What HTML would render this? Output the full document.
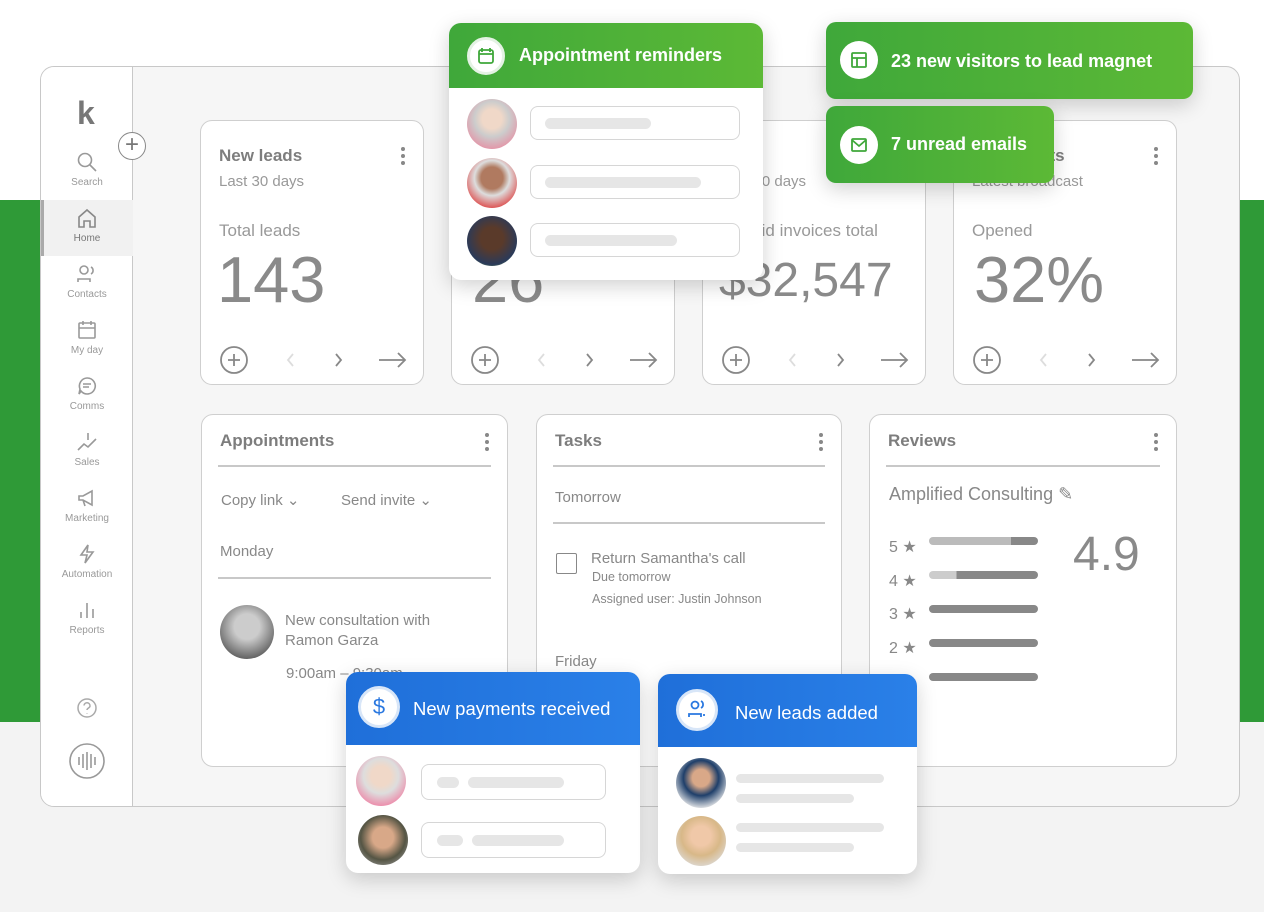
<!DOCTYPE html>
<html><head><meta charset="utf-8"><style>
*{box-sizing:border-box;margin:0;padding:0}
body{width:1264px;height:912px;position:relative;overflow:hidden;background:#fff;font-family:"Liberation Sans",sans-serif;color:#888}
.abs{position:absolute}
.band{left:0;top:200px;width:1264px;height:522px;background:#2f9a37}
.bot{left:0;top:722px;width:1264px;height:190px;background:#f3f3f3}
.frame{left:40px;top:66px;width:1200px;height:741px;border:1.5px solid #c8c8c8;border-radius:14px;background:#f6f6f6;overflow:hidden}
.side{left:0;top:0;width:92px;height:100%;background:#fff;border-right:1.5px solid #c8c8c8}
.nav{position:absolute;left:0;width:92px;text-align:center;font-size:10px;color:#999}
.nav svg{display:block;margin:0 auto 4px}
.card{position:absolute;background:#fff;border:1.5px solid #cfcfcf;border-radius:12px}
.t{font-size:17px;font-weight:bold;color:#7d7d7d}
.s{font-size:15px;color:#999}
.big{font-size:65px;color:#8a8a8a}
.dots{position:absolute;right:18px;top:26px;width:4px}
.dots i{display:block;width:4px;height:4px;border-radius:2px;background:#888;margin-bottom:3px}
.hr{position:absolute;height:1.5px;background:#c8c8c8}
.pop{position:absolute;background:#fff;border-radius:12px;overflow:hidden;box-shadow:0 6px 20px rgba(0,0,0,.18)}
.gh{background:linear-gradient(90deg,#3fa83a,#5cb936);color:#fff;font-weight:bold;font-size:18px}
.bh{background:linear-gradient(90deg,#1f6fd9,#2a80e8);color:#fff;font-weight:bold;font-size:18px}
.ic{position:absolute;width:38px;height:38px;border-radius:50%;background:#fff;border:3px solid #e4f2e4}
.av{position:absolute;width:50px;height:50px;border-radius:50%}
.fld{position:absolute;border:1.5px solid #d6d6d6;border-radius:8px;background:#fff}
.bar{position:absolute;height:11px;border-radius:6px;background:#e6e6e6}
</style></head><body>
<div class="abs band"></div><div class="abs bot"></div>
<div class="abs frame">
 <div class="abs side">
  <div style="position:absolute;left:36px;top:30px;font-size:32px;font-weight:bold;color:#777;line-height:1">k</div>
  <div class="nav" style="top:84px"><svg width="22" height="22" viewBox="0 0 22 22" fill="none" stroke="#999" stroke-width="1.6"><circle cx="9" cy="9" r="6.5"/><path d="M14 14l6 6"/></svg>Search</div>
  <div style="position:absolute;left:0;top:133px;width:92px;height:56px;background:#f1f1f1;border-left:3px solid #aaa"></div>
  <div class="nav" style="top:140px;color:#777"><svg width="22" height="22" viewBox="0 0 22 22" fill="none" stroke="#888" stroke-width="1.6"><path d="M3 10L11 3l8 7v10h-5v-6H8v6H3z"/></svg>Home</div>
  <div class="nav" style="top:196px"><svg width="22" height="22" viewBox="0 0 22 22" fill="none" stroke="#999" stroke-width="1.6"><circle cx="8" cy="7" r="4"/><path d="M2 19v-3h12v3M15 4a4 4 0 010 7"/></svg>Contacts</div>
  <div class="nav" style="top:252px"><svg width="22" height="22" viewBox="0 0 22 22" fill="none" stroke="#999" stroke-width="1.6"><rect x="3" y="4" width="16" height="15" rx="1"/><path d="M3 9h16M7 2v4M15 2v4"/></svg>My day</div>
  <div class="nav" style="top:308px"><svg width="22" height="22" viewBox="0 0 22 22" fill="none" stroke="#999" stroke-width="1.6"><path d="M11 3a8 8 0 11-6 13l-2 3 1-5A8 8 0 0111 3zM7 9h8M7 12h6"/></svg>Comms</div>
  <div class="nav" style="top:364px"><svg width="22" height="22" viewBox="0 0 22 22" fill="none" stroke="#999" stroke-width="1.6"><path d="M2 19l6-6 4 3 8-8M12 2v7"/></svg>Sales</div>
  <div class="nav" style="top:420px"><svg width="22" height="22" viewBox="0 0 22 22" fill="none" stroke="#999" stroke-width="1.6"><path d="M3 9h4l9-5v14l-9-5H3zM7 13l2 6"/></svg>Marketing</div>
  <div class="nav" style="top:476px"><svg width="22" height="22" viewBox="0 0 22 22" fill="none" stroke="#999" stroke-width="1.6"><path d="M12 2L5 12h6l-2 8 8-11h-6z"/></svg>Automation</div>
  <div class="nav" style="top:532px"><svg width="22" height="22" viewBox="0 0 22 22" fill="none" stroke="#999" stroke-width="1.6"><path d="M5 19v-6M11 19V4M17 19v-9"/></svg>Reports</div>
  <svg style="position:absolute;left:35px;top:630px" width="22" height="22" viewBox="0 0 22 22" fill="none" stroke="#aaa" stroke-width="1.5"><circle cx="11" cy="11" r="9"/><path d="M8 8.5a3 3 0 116 .5c0 2-3 2-3 4M11 16v.5"/></svg>
  <svg style="position:absolute;left:27px;top:675px" width="38" height="38" viewBox="0 0 38 38" fill="none" stroke="#999" stroke-width="1.6"><circle cx="19" cy="19" r="17"/><path d="M11 15v8M15 12v14M19 10v18M23 12v14M27 15v8"/></svg>
 </div>
 <div style="position:absolute;left:77px;top:65px;width:28px;height:28px;border-radius:50%;border:1.5px solid #888;background:#fff;text-align:center;line-height:24px;font-size:24px;color:#777">+</div>
</div>

<div class="card" style="left:200px;top:120px;width:224px;height:265px">
 <div class="t abs" style="left:18px;top:25px">New leads</div><div class="dots"><i></i><i></i><i></i></div>
 <div class="s abs" style="left:18px;top:52px">Last 30 days</div>
 <div class="abs" style="left:18px;top:100px;font-size:17px;color:#999">Total leads</div>
 <div class="big abs" style="left:16px;top:121px">143</div>
 <svg class="abs" style="left:18px;top:224px" width="190" height="30" fill="none" stroke-width="1.8"><circle cx="15" cy="15" r="13" stroke="#888"/><path d="M15 9v12M9 15h12" stroke="#888"/><path d="M74 9l-5 6 5 6" stroke="#ddd"/><path d="M117 9l5 6-5 6" stroke="#888"/><path d="M160 15h26M179 8l7 7-7 7" stroke="#888"/></svg>
</div>
<div class="card" style="left:451px;top:120px;width:224px;height:265px">
 <div class="big abs" style="left:20px;top:121px">26</div>
 <svg class="abs" style="left:18px;top:224px" width="190" height="30" fill="none" stroke-width="1.8"><circle cx="15" cy="15" r="13" stroke="#888"/><path d="M15 9v12M9 15h12" stroke="#888"/><path d="M74 9l-5 6 5 6" stroke="#ddd"/><path d="M117 9l5 6-5 6" stroke="#888"/><path d="M160 15h26M179 8l7 7-7 7" stroke="#888"/></svg>
</div>
<div class="card" style="left:702px;top:120px;width:224px;height:265px">
 <div class="s abs" style="left:18px;top:52px">Last 30 days</div>
 <div class="abs" style="left:18px;top:100px;font-size:17px;color:#999">Unpaid invoices total</div>
 <div class="abs" style="left:16px;top:132px;font-size:48px;color:#8a8a8a">$32,547</div>
 <svg class="abs" style="left:18px;top:224px" width="190" height="30" fill="none" stroke-width="1.8"><circle cx="15" cy="15" r="13" stroke="#888"/><path d="M15 9v12M9 15h12" stroke="#888"/><path d="M74 9l-5 6 5 6" stroke="#ddd"/><path d="M117 9l5 6-5 6" stroke="#888"/><path d="M160 15h26M179 8l7 7-7 7" stroke="#888"/></svg>
</div>
<div class="card" style="left:953px;top:120px;width:224px;height:265px">
 <div class="t abs" style="left:18px;top:25px">Broadcasts</div><div class="dots"><i></i><i></i><i></i></div>
 <div class="s abs" style="left:18px;top:52px">Latest broadcast</div>
 <div class="abs" style="left:18px;top:100px;font-size:17px;color:#999">Opened</div>
 <div class="big abs" style="left:20px;top:121px">32%</div>
 <svg class="abs" style="left:18px;top:224px" width="190" height="30" fill="none" stroke-width="1.8"><circle cx="15" cy="15" r="13" stroke="#888"/><path d="M15 9v12M9 15h12" stroke="#888"/><path d="M74 9l-5 6 5 6" stroke="#ddd"/><path d="M117 9l5 6-5 6" stroke="#888"/><path d="M160 15h26M179 8l7 7-7 7" stroke="#888"/></svg>
</div>

<div class="card" style="left:201px;top:414px;width:307px;height:353px">
 <div class="t abs" style="left:18px;top:16px">Appointments</div><div class="dots" style="top:18px"><i></i><i></i><i></i></div>
 <div class="hr" style="left:16px;right:16px;top:50px"></div>
 <div class="abs" style="left:19px;top:76px;font-size:15px;color:#888">Copy link ⌄</div>
 <div class="abs" style="left:139px;top:76px;font-size:15px;color:#888">Send invite ⌄</div>
 <div class="abs" style="left:18px;top:128px;font-size:15px;color:#888">Monday</div>
 <div class="hr" style="left:16px;right:16px;top:162px"></div>
 <div class="av" style="left:18px;top:190px;width:54px;height:54px;background:radial-gradient(circle at 50% 40%,#ccc 30%,#666 75%)"></div>
 <div class="abs" style="left:83px;top:196px;font-size:15px;color:#888;line-height:20px">New consultation with<br>Ramon Garza</div>
 <div class="abs" style="left:84px;top:250px;font-size:15px;color:#888">9:00am – 9:30am</div>
</div>
<div class="card" style="left:536px;top:414px;width:306px;height:353px">
 <div class="t abs" style="left:18px;top:16px">Tasks</div><div class="dots" style="top:18px"><i></i><i></i><i></i></div>
 <div class="hr" style="left:16px;right:16px;top:50px"></div>
 <div class="abs" style="left:18px;top:74px;font-size:15px;color:#888">Tomorrow</div>
 <div class="hr" style="left:16px;right:16px;top:107px"></div>
 <div class="abs" style="left:19px;top:138px;width:21px;height:21px;border:1.5px solid #888;border-radius:2px"></div>
 <div class="abs" style="left:54px;top:135px;font-size:15px;color:#888">Return Samantha's call</div>
 <div class="abs" style="left:55px;top:155px;font-size:12.5px;color:#888">Due tomorrow</div>
 <div class="abs" style="left:55px;top:177px;font-size:12.5px;color:#888">Assigned user: Justin Johnson</div>
 <div class="abs" style="left:18px;top:238px;font-size:15px;color:#888">Friday</div>
</div>
<div class="card" style="left:869px;top:414px;width:308px;height:353px">
 <div class="t abs" style="left:18px;top:16px">Reviews</div><div class="dots" style="top:18px"><i></i><i></i><i></i></div>
 <div class="hr" style="left:16px;right:16px;top:50px"></div>
 <div class="abs" style="left:19px;top:69px;font-size:18px;color:#888">Amplified Consulting ✎</div>
 <div class="abs" style="left:19px;top:116px;font-size:16px;color:#888;line-height:33.7px">5 ★<br>4 ★<br>3 ★<br>2 ★<br>1 ★</div>
 <div class="abs" style="left:59px;top:122px;width:109px;height:8px;border-radius:4px;background:linear-gradient(90deg,#bbb 75%,#888 75%)"></div>
 <div class="abs" style="left:59px;top:156px;width:109px;height:8px;border-radius:4px;background:linear-gradient(90deg,#ccc 25%,#888 25%)"></div>
 <div class="abs" style="left:59px;top:190px;width:109px;height:8px;border-radius:4px;background:#888"></div>
 <div class="abs" style="left:59px;top:224px;width:109px;height:8px;border-radius:4px;background:#888"></div>
 <div class="abs" style="left:59px;top:258px;width:109px;height:8px;border-radius:4px;background:#888"></div>
 <div class="abs" style="left:203px;top:112px;font-size:48px;color:#8a8a8a">4.9</div>
</div>

<div class="pop" style="left:449px;top:23px;width:314px;height:257px">
 <div class="gh" style="height:65px;position:relative">
  <div class="ic" style="left:18px;top:14px"><svg width="32" height="32" viewBox="0 0 32 32" fill="none" stroke="#3fa83a" stroke-width="1.8"><rect x="9" y="10" width="14" height="13" rx="2"/><path d="M9 14h14M12 8v4M20 8v4"/></svg></div>
  <div class="abs" style="left:70px;top:22px">Appointment reminders</div>
 </div>
 <div class="av" style="left:18px;top:76px;background:radial-gradient(circle at 50% 40%,#f0d8c8 25%,#ccc 45%,#e88aa0 85%)"></div>
 <div class="av" style="left:18px;top:135px;background:radial-gradient(circle at 50% 40%,#b07a60 28%,#ddd 45%,#d33 85%)"></div>
 <div class="av" style="left:18px;top:193px;background:radial-gradient(circle at 50% 45%,#5a3a2a 30%,#2a3a5a 70%,#9c6 90%)"></div>
 <div class="fld" style="left:81px;top:83px;width:210px;height:34px"><div class="bar" style="left:14px;top:11px;width:106px"></div></div>
 <div class="fld" style="left:81px;top:142px;width:210px;height:34px"><div class="bar" style="left:14px;top:11px;width:156px"></div></div>
 <div class="fld" style="left:81px;top:200px;width:210px;height:34px"><div class="bar" style="left:14px;top:11px;width:132px"></div></div>
</div>

<div class="pop gh" style="left:826px;top:22px;width:367px;height:77px;border-radius:10px">
 <div class="ic" style="left:14px;top:19px;border:none"><svg width="38" height="38" viewBox="0 0 38 38" fill="none" stroke="#3fa83a" stroke-width="1.8"><rect x="12" y="12" width="14" height="14" rx="1"/><path d="M12 17h14M17 17v9"/></svg></div>
 <div class="abs" style="left:65px;top:29px">23 new visitors to lead magnet</div>
</div>
<div class="pop gh" style="left:826px;top:106px;width:228px;height:77px;border-radius:10px">
 <div class="ic" style="left:14px;top:20px;border:none"><svg width="38" height="38" viewBox="0 0 38 38" fill="none" stroke="#3fa83a" stroke-width="1.8"><rect x="12" y="13" width="14" height="12" rx="1"/><path d="M12 14l7 6 7-6"/></svg></div>
 <div class="abs" style="left:65px;top:28px">7 unread emails</div>
</div>

<div class="pop" style="left:346px;top:672px;width:294px;height:201px">
 <div class="bh" style="height:73px;position:relative">
  <div class="ic" style="left:12px;top:14px;width:42px;height:42px;border-color:#d8e6f8"><div style="text-align:center;line-height:36px;color:#2a78e0;font-size:22px;font-weight:normal">$</div></div>
  <div class="abs" style="left:67px;top:26px;font-weight:normal;font-size:18.5px">New payments received</div>
 </div>
 <div class="av" style="left:10px;top:84px;background:radial-gradient(circle at 50% 40%,#f0d8c8 25%,#ddd 45%,#f07aa0 85%)"></div>
 <div class="av" style="left:12px;top:143px;background:radial-gradient(circle at 50% 45%,#d8a888 28%,#554 60%,#999 90%)"></div>
 <div class="fld" style="left:75px;top:92px;width:185px;height:36px"><div class="bar" style="left:15px;top:12px;width:22px"></div><div class="bar" style="left:46px;top:12px;width:96px"></div></div>
 <div class="fld" style="left:75px;top:150px;width:185px;height:36px"><div class="bar" style="left:15px;top:12px;width:26px"></div><div class="bar" style="left:50px;top:12px;width:92px"></div></div>
</div>
<div class="pop" style="left:658px;top:674px;width:259px;height:200px">
 <div class="bh" style="height:73px;position:relative">
  <div class="ic" style="left:18px;top:15px;width:42px;height:42px;border-color:#d8e6f8"><svg width="36" height="36" viewBox="0 0 36 36" fill="none" stroke="#2a78e0" stroke-width="1.8"><circle cx="16" cy="13" r="3.5"/><path d="M10 25v-3h12v3M22 9a4 4 0 010 7M25 24v-2"/></svg></div>
  <div class="abs" style="left:77px;top:28px;font-weight:normal;font-size:18.5px">New leads added</div>
 </div>
 <div class="av" style="left:18px;top:84px;background:radial-gradient(circle at 50% 40%,#d9a888 22%,#1f3f6a 45%,#eee 80%)"></div>
 <div class="av" style="left:18px;top:142px;background:radial-gradient(circle at 50% 40%,#f0c8a8 25%,#d8b888 50%,#ddd 85%)"></div>
 <div class="bar" style="left:78px;top:100px;width:148px;height:9px"></div>
 <div class="bar" style="left:78px;top:120px;width:118px;height:9px"></div>
 <div class="bar" style="left:78px;top:149px;width:148px;height:9px"></div>
 <div class="bar" style="left:78px;top:169px;width:118px;height:9px"></div>
</div>
</body></html>
